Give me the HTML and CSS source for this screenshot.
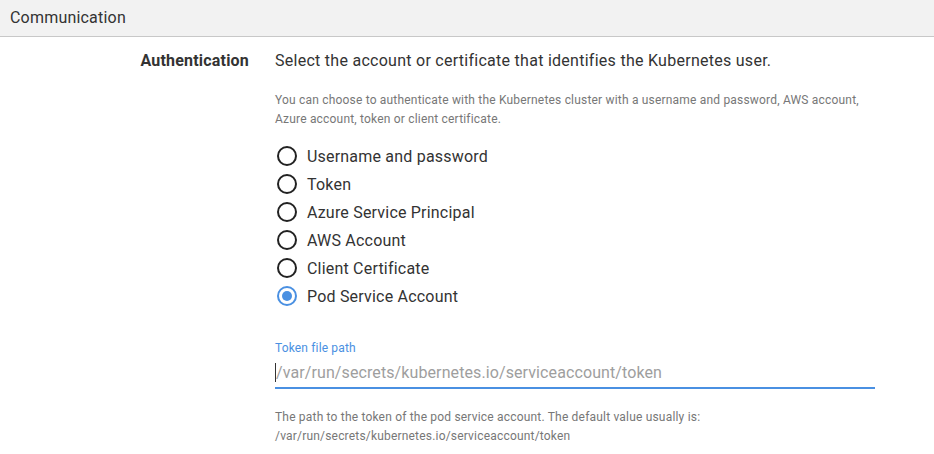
FILE: index.html
```html
<!DOCTYPE html>
<html>
<head>
<meta charset="utf-8">
<link rel="stylesheet" href="styles.css">
</head>
<body>
<div class="header">Communication</div>
<div class="row">
  <div class="label">Authentication</div>
  <div class="content">
    <div class="title">Select the account or certificate that identifies the Kubernetes user.</div>
    <div class="help">You can choose to authenticate with the Kubernetes cluster with a username and password, AWS account,<br>Azure account, token or client certificate.</div>
    <div class="radios">
      <label class="radio"><span class="dot"></span>Username and password</label>
      <label class="radio"><span class="dot"></span>Token</label>
      <label class="radio"><span class="dot"></span>Azure Service Principal</label>
      <label class="radio"><span class="dot"></span>AWS Account</label>
      <label class="radio"><span class="dot"></span>Client Certificate</label>
      <label class="radio checked"><span class="dot"></span>Pod Service Account</label>
    </div>
    <div class="field">
      <div class="field-label">Token file path</div>
      <div class="input"><span class="caret"></span><span class="placeholder">/var/run/secrets/kubernetes.io/serviceaccount/token</span></div>
    </div>
    <div class="help help2">The path to the token of the pod service account. The default value usually is:<br>/var/run/secrets/kubernetes.io/serviceaccount/token</div>
  </div>
</div>
</body>
</html>
```
FILE: styles.css
```css
* { box-sizing: border-box; }
body {
  margin: 0;
  font-family: Roboto, "Noto Sans", sans-serif;
  color: #333;
  background: #fff;
}
.header {
  height: 37px;
  background: #f2f2f2;
  border-bottom: 1px solid #c8c8c8;
  font-size: 16px;
  line-height: 36px;
  padding-left: 10px;
  color: #333;
  letter-spacing: 0.2px;
}
.row {
  display: flex;
  padding-top: 14px;
}
.label {
  width: 249px;
  text-align: right;
  font-weight: bold;
  font-size: 16px;
  line-height: 20px;
  color: #333;
  letter-spacing: 0.2px;
}
.content {
  margin-left: 26px;
  width: 600px;
}
.title {
  font-size: 16px;
  line-height: 20px;
  color: #333;
  letter-spacing: 0.27px;
}
.help {
  font-size: 12px;
  line-height: 18.5px;
  color: #777;
  margin-top: 20px;
  letter-spacing: 0.19px;
}
.radios {
  margin-top: 14px;
  display: flex;
  flex-direction: column;
}
.radio {
  display: flex;
  align-items: center;
  height: 28px;
  font-size: 16px;
  color: #333;
  letter-spacing: 0.2px;
}
.dot {
  width: 20px;
  height: 20px;
  border: 2px solid #222;
  border-radius: 50%;
  margin: 0 10px 0 2px;
  display: flex;
  align-items: center;
  justify-content: center;
}
.checked .dot {
  border-color: #4a90e2;
}
.checked .dot::after {
  content: "";
  width: 10px;
  height: 10px;
  border-radius: 50%;
  background: #4a90e2;
}
.field {
  margin-top: 30px;
}
.field-label {
  font-size: 12px;
  line-height: 16px;
  color: #4a90e2;
  letter-spacing: 0.15px;
}
.input {
  margin-top: 0;
  width: 600px;
  height: 33px;
  border-bottom: 2px solid #4a90e2;
  display: flex;
  align-items: center;
  padding-top: 2px;
}
.caret {
  width: 1px;
  height: 19px;
  background: #333;
}
.placeholder {
  font-size: 16px;
  color: #9e9e9e;
  letter-spacing: 0.1px;
}
.help2 {
  margin-top: 19px;
  line-height: 19px;
}
```
